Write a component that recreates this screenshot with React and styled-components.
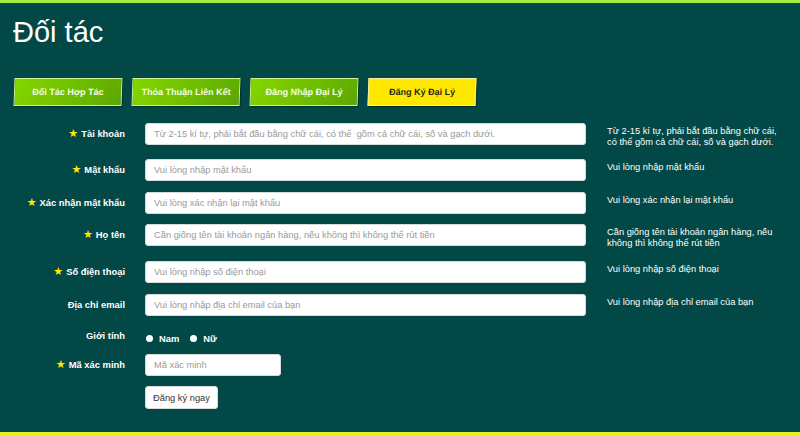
import styled, { createGlobalStyle } from "styled-components";

const Global = createGlobalStyle`
    html, body {
        margin: 0;
        padding: 0;
        background: #014846;
    }
    * { box-sizing: border-box; }
`;

const Page = styled.div`
    height: 100vh;
    border-top: 3px solid #a6ea3c;
    border-bottom: 3px solid #e4f41e;
    background: #014846;
    font-family: "Liberation Sans", Arial, sans-serif;
    color: #fff;
    overflow: hidden;
`;

const Title = styled.h1`
    margin: 12px 0 0 13px;
    font-size: 29px;
    line-height: 34px;
    font-weight: normal;
    color: #fff;
`;

const Tabs = styled.div`
    display: flex;
    gap: 10px;
    margin: 29px 0 0 14px;
`;

const Tab = styled.div`
    width: 108px;
    height: 28px;
    display: flex;
    align-items: center;
    justify-content: center;
    font-size: 9px;
    font-weight: bold;
    border: 1px solid ${p => (p.$active ? "#f6ef9c" : "#cdf48e")};
    box-shadow: 1px 1px 1px rgba(0, 0, 0, 0.35);
    background: ${p => (p.$active ? "#ffe800" : "linear-gradient(120deg, #86d600 0%, #6cbc00 60%, #5ca600 100%)")};
    color: ${p => (p.$active ? "#2b2b14" : "#f4ffe2")};
    transform: skewX(-2deg);
`;

const Form = styled.div`
    display: grid;
    grid-template-columns: 125px 441px 1fr;
    column-gap: 20px;
    margin-top: 17px;
`;

const Row = styled.div`
    display: contents;
`;

const Cell = styled.div`
    height: ${p => p.$h}px;
`;

const Label = styled(Cell)`
    text-align: right;
    font-size: 9.4px;
    font-weight: bold;
    line-height: 22px;
    white-space: nowrap;
`;

const Star = styled.span`
    color: #ffe600;
    font-size: 11px;
    margin-right: 3px;
    font-family: "DejaVu Sans", sans-serif;
`;

const Input = styled.input`
    display: block;
    width: ${p => p.$w || "100%"};
    height: 22px;
    padding: 0 8px;
    border: 1px solid #d6dcdc;
    border-radius: 3px;
    background: #fff;
    font-family: "Liberation Sans", Arial, sans-serif;
    font-size: 9.3px;
    outline: none;
    &::placeholder {
        color: #9a9a9a;
    }
`;

const Hint = styled(Cell)`
    padding: 3px 0 0 1px;
    font-size: 9.3px;
    line-height: 11px;
    color: #fff;
`;

const Gender = styled(Cell)`
    display: flex;
    align-items: center;
    font-size: 9.4px;
    font-weight: bold;
    padding-bottom: 4px;
`;

const Choice = styled.label`
    display: flex;
    align-items: center;
    margin-right: 10px;
`;

const Dot = styled.span`
    width: 7px;
    height: 7px;
    border-radius: 50%;
    background: #fff;
    margin: 0 6px 0 1px;
`;

const Button = styled.button`
    width: 73px;
    height: 23px;
    padding: 0;
    border: 1px solid #d6dcdc;
    border-radius: 3px;
    background: #fff;
    color: #333;
    font-family: "Liberation Sans", Arial, sans-serif;
    font-size: 9.3px;
`;

const fields = [
    { label: "Tài khoản", req: true, ph: "Từ 2-15 kí tự, phải bắt đầu bằng chữ cái, có thể  gồm cả chữ cái, số và gạch dưới.", hint: ["Từ 2-15 kí tự, phải bắt đầu bằng chữ cái,", "có thể gồm cả chữ cái, số và gạch dưới."], h: 36 },
    { label: "Mật khẩu", req: true, ph: "Vui lòng nhập mật khẩu", hint: ["Vui lòng nhập mật khẩu"], h: 33 },
    { label: "Xác nhận mật khẩu", req: true, ph: "Vui lòng xác nhận lại mật khẩu", hint: ["Vui lòng xác nhận lại mật khẩu"], h: 32 },
    { label: "Họ tên", req: true, ph: "Cần giống tên tài khoản ngân hàng, nếu không thì không thể rút tiền", hint: ["Cần giống tên tài khoản ngân hàng, nếu", "không thì không thể rút tiền"], h: 37 },
    { label: "Số điện thoại", req: true, ph: "Vui lòng nhập số điện thoại", hint: ["Vui lòng nhập số điện thoại"], h: 33 },
    { label: "Địa chỉ email", req: false, ph: "Vui lòng nhập địa chỉ email của bạn", hint: ["Vui lòng nhập địa chỉ email của bạn"], h: 32 },
];

const tabs = ["Đối Tác Hợp Tác", "Thỏa Thuận Liên Kết", "Đăng Nhập Đại Lý", "Đăng Ký Đại Lý"];

export default function App() {
    return <Page>
        <Global />
        <Title>Đối tác</Title>
        <Tabs>
            {tabs.map((t, i) => <Tab key={t} $active={i === 3}>{t}</Tab>)}
        </Tabs>
        <Form>
            {fields.map(f => <Row key={f.label}>
                <Label $h={f.h}>{f.req && <Star>★</Star>}{f.label}</Label>
                <Cell $h={f.h}><Input placeholder={f.ph} /></Cell>
                <Hint $h={f.h}>{f.hint.map(l => <div key={l}>{l}</div>)}</Hint>
            </Row>)}
            <Row>
                <Label $h={28} style={{ lineHeight: "20px" }}>Giới tính</Label>
                <Gender $h={28}>
                    <Choice><Dot />Nam</Choice>
                    <Choice><Dot />Nữ</Choice>
                </Gender>
                <Cell $h={28} />
            </Row>
            <Row>
                <Label $h={32}><Star>★</Star>Mã xác minh</Label>
                <Cell $h={32}><Input $w="136px" placeholder="Mã xác minh" /></Cell>
                <Cell $h={32} />
            </Row>
            <Row>
                <Cell $h={30} />
                <Cell $h={30}><Button>Đăng ký ngay</Button></Cell>
                <Cell $h={30} />
            </Row>
        </Form>
    </Page>;
}
